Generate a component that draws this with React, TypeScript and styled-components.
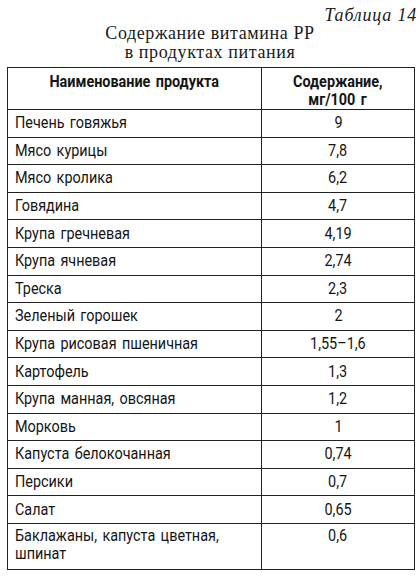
import { createGlobalStyle, styled } from 'styled-components';

const GlobalStyle = createGlobalStyle`
  html, body {
    margin: 0;
    padding: 0;
    background: #fff;
  }
`;

const Page = styled.div`
  width: 420px;
  height: 576px;
  background: #fff;
  color: #1a1a1a;
  overflow: hidden;
`;

const TableLabel = styled.div`
  font-family: "Liberation Serif", "Times New Roman", serif;
  font-style: italic;
  font-size: 18px;
  line-height: 18px;
  letter-spacing: 0.8px;
  text-align: right;
  padding: 6px 3px 0 0;
`;

const Caption = styled.div`
  font-family: "Liberation Serif", "Times New Roman", serif;
  font-size: 18px;
  line-height: 19px;
  letter-spacing: 0.6px;
  text-align: center;
  margin-bottom: 5px;
`;

const Table = styled.table`
  margin-left: 7px;
  width: 407px;
  border-collapse: collapse;
  table-layout: fixed;
  font-family: Roboto, "Liberation Sans", sans-serif;
  font-size: 16px;
  color: #151515;

  td, th {
    border: 1.5px solid #222;
  }
`;

// the print uses a condensed face; squeeze Roboto to its width
const Narrow = styled.span<{ $scale: number; $origin: 'left' | 'center' }>`
  display: inline-block;
  white-space: nowrap;
  word-spacing: 2px;
  transform: scaleX(${p => p.$scale});
  transform-origin: ${p => p.$origin} top;
`;

const HeadCell = styled.th<{ $w: number }>`
  width: ${p => p.$w}px;
  height: 42px;
  box-sizing: border-box;
  font-size: 16px;
  font-weight: bold;
  text-align: center;
  vertical-align: top;
  line-height: 17.5px;
  padding: 5px 4px 0;
`;

const NameCell = styled.td<{ $tall?: boolean }>`
  height: ${p => (p.$tall ? 46 : 27.6)}px;
  box-sizing: border-box;
  padding: ${p => (p.$tall ? '3px 7px 0' : '0 7px')};
  vertical-align: ${p => (p.$tall ? 'top' : 'middle')};
  line-height: 18px;
  text-align: left;
`;

const ValueCell = styled.td<{ $tall?: boolean }>`
  box-sizing: border-box;
  padding: ${p => (p.$tall ? '3px 4px 0' : '0 4px')};
  vertical-align: ${p => (p.$tall ? 'top' : 'middle')};
  line-height: 18px;
  text-align: center;
`;

const rows: [string, string][] = [
  ['Печень говяжья', '9'],
  ['Мясо курицы', '7,8'],
  ['Мясо кролика', '6,2'],
  ['Говядина', '4,7'],
  ['Крупа гречневая', '4,19'],
  ['Крупа ячневая', '2,74'],
  ['Треска', '2,3'],
  ['Зеленый горошек', '2'],
  ['Крупа рисовая пшеничная', '1,55–1,6'],
  ['Картофель', '1,3'],
  ['Крупа манная, овсяная', '1,2'],
  ['Морковь', '1'],
  ['Капуста белокочанная', '0,74'],
  ['Персики', '0,7'],
  ['Салат', '0,65'],
];

const BODY_SCALE = 0.9;
const HEAD_SCALE = 0.9;

const App = () => {
  return (
    <Page>
      <GlobalStyle />
      <TableLabel>Таблица 14</TableLabel>
      <Caption>
        Содержание витамина PP
        <br />
        в продуктах питания
      </Caption>
      <Table>
        <thead>
          <tr>
            <HeadCell $w={254}>
              <Narrow $scale={HEAD_SCALE} $origin="center">Наименование продукта</Narrow>
            </HeadCell>
            <HeadCell $w={153}>
              <Narrow $scale={HEAD_SCALE} $origin="center">Содержание,</Narrow>
              <br />
              <Narrow $scale={HEAD_SCALE} $origin="center">мг/100 г</Narrow>
            </HeadCell>
          </tr>
        </thead>
        <tbody>
          {rows.map(([name, value]) => (
            <tr key={name}>
              <NameCell>
                <Narrow $scale={BODY_SCALE} $origin="left">{name}</Narrow>
              </NameCell>
              <ValueCell>
                <Narrow $scale={BODY_SCALE} $origin="center">{value}</Narrow>
              </ValueCell>
            </tr>
          ))}
          <tr>
            <NameCell $tall>
              <Narrow $scale={BODY_SCALE} $origin="left">Баклажаны, капуста цветная,</Narrow>
              <br />
              <Narrow $scale={BODY_SCALE} $origin="left">шпинат</Narrow>
            </NameCell>
            <ValueCell $tall>
              <Narrow $scale={BODY_SCALE} $origin="center">0,6</Narrow>
            </ValueCell>
          </tr>
        </tbody>
      </Table>
    </Page>
  );
};

export default App;
